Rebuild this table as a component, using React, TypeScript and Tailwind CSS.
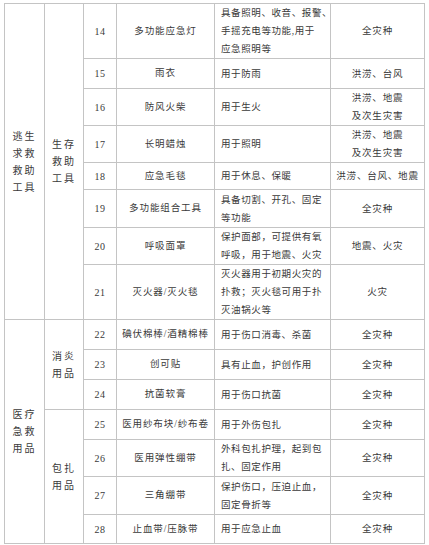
import React from 'react';

type Row = {
  no: number;
  name: string;
  desc: string[];
  kind: string[];
  h: number;
};

const rows: Row[] = [
  { no: 14, name: '多功能应急灯', desc: ['具备照明、收音、报警、', '手摇充电等功能,用于', '应急照明等'], kind: ['全灾种'], h: 55 },
  { no: 15, name: '雨衣', desc: ['用于防雨'], kind: ['洪涝、台风'], h: 30 },
  { no: 16, name: '防风火柴', desc: ['用于生火'], kind: ['洪涝、地震', '及次生灾害'], h: 37 },
  { no: 17, name: '长明蜡烛', desc: ['用于照明'], kind: ['洪涝、地震', '及次生灾害'], h: 37 },
  { no: 18, name: '应急毛毯', desc: ['用于休息、保暖'], kind: ['洪涝、台风、地震'], h: 27 },
  { no: 19, name: '多功能组合工具', desc: ['具备切割、开孔、固定', '等功能'], kind: ['全灾种'], h: 38 },
  { no: 20, name: '呼吸面罩', desc: ['保护面部，可提供有氧', '呼吸，用于地震、火灾'], kind: ['地震、火灾'], h: 36 },
  { no: 21, name: '灭火器/灭火毯', desc: ['灭火器用于初期火灾的', '扑救；灭火毯可用于扑', '灭油锅火等'], kind: ['火灾'], h: 55 },
  { no: 22, name: '碘伏棉棒/酒精棉棒', desc: ['用于伤口消毒、杀菌'], kind: ['全灾种'], h: 30 },
  { no: 23, name: '创可贴', desc: ['具有止血，护创作用'], kind: ['全灾种'], h: 30 },
  { no: 24, name: '抗菌软膏', desc: ['用于伤口抗菌'], kind: ['全灾种'], h: 30 },
  { no: 25, name: '医用纱布块/纱布卷', desc: ['用于外伤包扎'], kind: ['全灾种'], h: 30 },
  { no: 26, name: '医用弹性绷带', desc: ['外科包扎护理，起到包', '扎、固定作用'], kind: ['全灾种'], h: 36 },
  { no: 27, name: '三角绷带', desc: ['保护伤口，压迫止血，', '固定骨折等'], kind: ['全灾种'], h: 38 },
  { no: 28, name: '止血带/压脉带', desc: ['用于应急止血'], kind: ['全灾种'], h: 29 },
];

// group cells: [row index where it starts, rowSpan, lines]
const groupA: Record<number, [number, string[]]> = {
  0: [8, ['逃生', '求救', '救助', '工具']],
  8: [7, ['医疗', '急救', '用品']],
};
const groupB: Record<number, [number, string[]]> = {
  0: [8, ['生存', '救助', '工具']],
  8: [3, ['消炎', '用品']],
  11: [4, ['包扎', '用品']],
};

const cell = 'border border-[#c4c4c4] p-0 align-middle';

function Lines({ lines }: { lines: string[] }) {
  return (
    <div className="flex flex-col items-center leading-[17px] tracking-[2px]">
      {lines.map((l, i) => (
        <span key={i} className="whitespace-nowrap">{l}</span>
      ))}
    </div>
  );
}

export default function App() {
  return (
    <div
      className="w-[429px] h-[545px] bg-white pl-[4px] pt-[3px] text-[#3a3a3a] text-[9.5px]"
      style={{ fontFamily: '"Liberation Serif", "Noto Sans CJK SC", serif' }}
    >
      <table className="table-fixed border-collapse w-[420px]">
        <colgroup>
          <col className="w-[40px]" />
          <col className="w-[39px]" />
          <col className="w-[33px]" />
          <col className="w-[98px]" />
          <col className="w-[116px]" />
          <col className="w-[94px]" />
        </colgroup>
        <tbody>
          {rows.map((r, i) => (
            <tr key={r.no} style={{ height: r.h }}>
              {groupA[i] && (
                <td rowSpan={groupA[i][0]} className={cell + ' text-[10px]'}>
                  <Lines lines={groupA[i][1]} />
                </td>
              )}
              {groupB[i] && (
                <td rowSpan={groupB[i][0]} className={cell + ' text-[10px]'}>
                  <Lines lines={groupB[i][1]} />
                </td>
              )}
              <td className={cell + ' text-center text-[10px] tracking-[0.5px]'}>{r.no}</td>
              <td className={cell + ' text-center tracking-[0.9px] whitespace-nowrap'}>{r.name}</td>
              <td className={cell + ' pl-[6px] tracking-[0.6px]'}>
                <div className="flex flex-col leading-[18px]">
                  {r.desc.map((d, j) => (
                    <span key={j} className="whitespace-nowrap">{d}</span>
                  ))}
                </div>
              </td>
              <td className={cell + ' tracking-[0.8px]'}>
                <div className="flex flex-col items-center leading-[18px]">
                  {r.kind.map((k, j) => (
                    <span key={j} className="whitespace-nowrap">{k}</span>
                  ))}
                </div>
              </td>
            </tr>
          ))}
        </tbody>
      </table>
    </div>
  );
}
